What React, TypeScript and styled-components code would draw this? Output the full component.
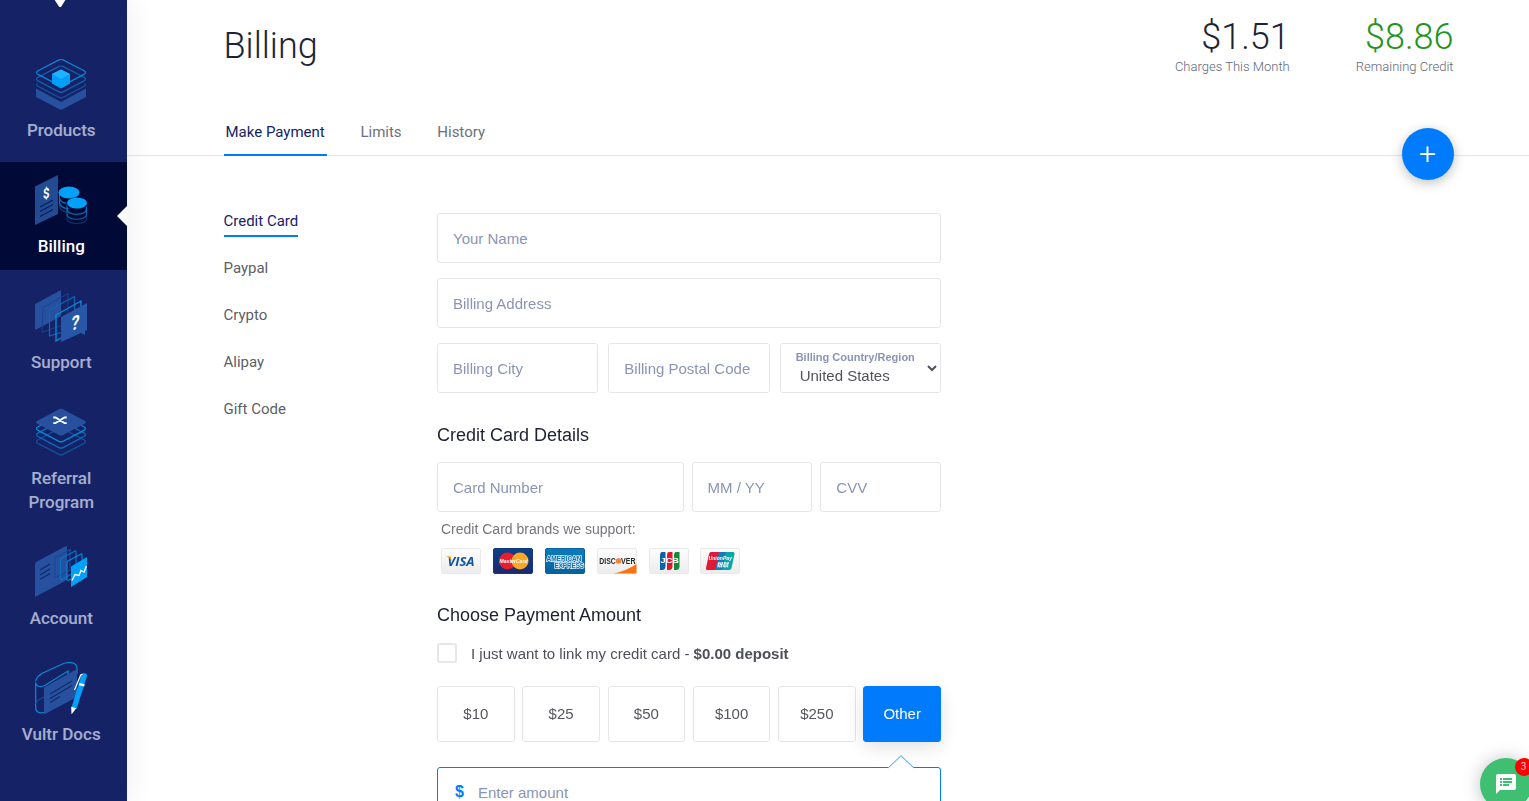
import React from "react";
import styled, { createGlobalStyle } from "styled-components";

const GlobalStyle = createGlobalStyle`
  *, *::before, *::after { box-sizing: border-box; }
  html, body { margin: 0; padding: 0; height: 100%; overflow: hidden; background: #fff; }
  body { font-family: Roboto, sans-serif; color: #1d2336; }
  input, select, button { font-family: "Liberation Sans", Arial, sans-serif; margin: 0; }
`;

const Page = styled.div`
  display: flex;
  height: 801px;
  overflow: hidden;
  position: relative;
`;

const Sidebar = styled.aside`
  position: relative;
  z-index: 1;
  width: 127px;
  flex: none;
  background: #152366;
  box-shadow: 0 0 28px rgba(0, 0, 0, 0.08);
  display: flex;
  flex-direction: column;
`;

const LogoTip = styled.div`
  height: 46px;
  padding-left: 54px;
  flex: none;
  svg { display: block; }
`;

const NavList = styled.nav`
  display: flex;
  flex-direction: column;
  gap: 8px;
`;

const NavItem = styled.a<{ $active?: boolean }>`
  position: relative;
  display: flex;
  flex-direction: column;
  align-items: center;
  gap: 8px;
  padding: 12px 4.5px 12px 0;
  background: ${(p) => (p.$active ? "#010a37" : "transparent")};
  svg { display: block; margin-left: -0.5px; }
  &::after {
    content: "";
    display: ${(p) => (p.$active ? "block" : "none")};
    position: absolute;
    right: 0;
    top: 44px;
    border: 10px solid transparent;
    border-left: 0;
    border-right-color: #fafafa;
  }
`;

const NavLabel = styled.span<{ $active?: boolean }>`
  width: 90px;
  text-align: center;
  font-size: 17px;
  line-height: 24px;
  font-weight: 500;
  color: ${(p) => (p.$active ? "#fff" : "#ecf0ff")};
  opacity: ${(p) => (p.$active ? 1 : 0.68)};
`;

const Main = styled.main`
  flex: 1;
  min-width: 0;
`;

const Header = styled.header`
  height: 156px;
  padding: 0 75.5px 0 96.5px;
  border-bottom: 1px solid #e5e5e8;
  display: flex;
  flex-direction: column;
  justify-content: space-between;
  position: relative;
`;

const HeaderTop = styled.div`
  display: flex;
  justify-content: space-between;
`;

const Title = styled.h1`
  margin: 22px 0 0;
  font-size: 36px;
  line-height: 48px;
  font-weight: 300;
`;

const Stats = styled.div`
  display: flex;
  gap: 66px;
  padding-top: 16px;
`;

const Stat = styled.div`
  text-align: right;
`;

const StatValue = styled.div<{ $positive?: boolean }>`
  font-size: 36px;
  line-height: 42px;
  font-weight: 300;
  color: ${(p) => (p.$positive ? "#1f9424" : "#1d2336")};
`;

const StatLabel = styled.div`
  font-size: 13px;
  line-height: 18px;
  font-weight: 300;
  color: #61667a;
`;

const Tabs = styled.div`
  display: flex;
  gap: 31.7px;
  margin-bottom: -1px;
`;

const Tab = styled.a<{ $active?: boolean }>`
  font-size: 15px;
  line-height: 20px;
  padding: 0 2px 12px;
  border-bottom: 2px solid ${(p) => (p.$active ? "#007bfc" : "transparent")};
  color: ${(p) => (p.$active ? "#152366" : "#6c7080")};
`;

const AddButton = styled.button`
  position: absolute;
  right: 75px;
  top: 128px;
  width: 52px;
  height: 52px;
  padding: 0 1px 0 0;
  border: 0;
  border-radius: 50%;
  background: #007bfc;
  box-shadow: 0 3px 12px rgba(0, 0, 0, 0.25);
  color: #fff;
  font: 300 30px/52px Roboto, sans-serif;
  text-align: center;
`;

const Content = styled.div`
  display: flex;
  padding: 57px 0 0 96.5px;
`;

const MethodNav = styled.nav`
  width: 213.5px;
  display: flex;
  flex-direction: column;
  align-items: flex-start;
  gap: 21px;
  margin-top: -2px;
`;

const Method = styled.a<{ $active?: boolean }>`
  font-size: 15px;
  line-height: 20px;
  padding-bottom: 4px;
  border-bottom: 2px solid ${(p) => (p.$active ? "#007bfc" : "transparent")};
  color: ${(p) => (p.$active ? "#152366" : "#5d5f66")};
`;

const Form = styled.form`
  width: 504px;
  font-family: "Liberation Sans", Arial, sans-serif;
  opacity: 0.999;
`;

const FieldRow = styled.div<{ $columns?: string; $gap?: number }>`
  display: grid;
  grid-template-columns: ${(p) => p.$columns || "1fr"};
  column-gap: ${(p) => p.$gap || 0}px;
`;

const Stack = styled.div`
  display: flex;
  flex-direction: column;
  gap: 15px;
`;

const TextInput = styled.input`
  width: 100%;
  min-width: 0;
  height: 50px;
  border: 1px solid #e5e6ea;
  border-radius: 3px;
  padding: 0 15px;
  font-size: 15px;
  color: #4b4d55;
  background: #fff;
  outline: none;
  &::placeholder { color: #8a94b5; opacity: 1; }
`;

const SelectField = styled.div`
  position: relative;
  height: 50px;
`;

const SelectLabel = styled.label`
  position: absolute;
  left: 16px;
  top: 8px;
  font-size: 11px;
  line-height: 13px;
  font-weight: 700;
  color: #8a94b5;
  white-space: nowrap;
`;

const Select = styled.select`
  width: 100%;
  height: 50px;
  border: 1px solid #e5e6ea;
  border-radius: 3px;
  padding: 14px 0 0 15px;
  font-size: 15px;
  color: #505258;
  background: #fff;
`;

const SectionTitle = styled.h2`
  margin: 0;
  padding: 31px 0 16px;
  font-size: 18px;
  line-height: 22px;
  font-weight: 400;
  color: #1d2130;
`;

const AmountTitle = styled(SectionTitle)`
  padding: 30px 0 17px;
`;

const BrandsText = styled.p`
  margin: 0;
  padding: 9px 0 0 4px;
  font-size: 14px;
  line-height: 16px;
  color: #74767c;
`;

const Brands = styled.div`
  display: flex;
  gap: 11.88px;
  padding: 11px 0 0 4px;
  svg { display: block; }
`;

const CheckRow = styled.label`
  display: flex;
  align-items: center;
  gap: 14px;
  height: 20px;
  font-size: 15px;
  line-height: 20px;
  color: #4d5057;
`;

const CheckText = styled.span`
  padding-top: 2px;
`;

const CheckBox = styled.span`
  width: 20px;
  height: 20px;
  border: 2px solid #e5e6ea;
  border-radius: 3px;
`;

const Amounts = styled.div`
  display: grid;
  grid-template-columns: repeat(6, 1fr);
  column-gap: 7.56px;
  margin-top: 23px;
`;

const Amount = styled.button<{ $active?: boolean }>`
  height: 56px;
  padding: 0 0 2px;
  font-size: 15px;
  border-radius: 3px;
  border: 1px solid ${(p) => (p.$active ? "#007bfc" : "#e5e6ea")};
  background: ${(p) => (p.$active ? "#007bfc" : "#fff")};
  color: ${(p) => (p.$active ? "#fff" : "#55575d")};
  box-shadow: ${(p) => (p.$active ? "0 5px 20px rgba(0, 0, 0, 0.13)" : "none")};
`;

const AmountBox = styled.div`
  position: relative;
  margin-top: 25px;
  height: 50px;
  border: 1px solid #007bfc;
  border-radius: 3px;
  display: flex;
  align-items: center;
  padding: 0 17px;
  background: #fff;
`;

const Pointer = styled.svg`
  position: absolute;
  right: 26px;
  top: -13px;
`;

const Currency = styled.span`
  width: 23px;
  font-size: 16px;
  line-height: 20px;
  font-weight: 700;
  color: #007bfc;
`;

const AmountInput = styled.input`
  flex: 1;
  border: 0;
  outline: 0;
  padding: 0;
  font-size: 15px;
  background: transparent;
  &::placeholder { color: #8a94b5; opacity: 1; }
`;

const ChatButton = styled.div`
  position: absolute;
  left: 1480px;
  top: 758px;
  width: 52px;
  height: 52px;
  border-radius: 50%;
  background: #3fbf72;
  box-shadow: 0 1px 18px rgba(0, 0, 0, 0.25);
  display: flex;
  align-items: center;
  justify-content: center;
`;

const Badge = styled.span`
  position: absolute;
  left: 35px;
  top: 0;
  width: 18px;
  height: 18px;
  border-radius: 50%;
  background: #fd0000;
  color: #ffc9c9;
  font: 400 10px/18px Roboto, sans-serif;
  text-align: center;
  padding-right: 1px;
`;

const Icon = ({ children }: { children: React.ReactNode }) => (
  <svg width="52" height="52" viewBox="0 0 52 52" fill="none">{children}</svg>
);

const layer = "M3 12.2 24 1.4Q26 .6 28 1.4L49 12.2Q52 14 49 15.9L28 26.9Q26 28 24 26.9L3 15.9Q0 14 3 12.2Z";

const ProductsIcon = () => (
  <Icon>
    <path d="M1 30.5 26 44 51 30.5V39L28 51Q26 52.2 24 51L1 39Z" fill="#27519f" />
    <path d={layer} transform="translate(0 12.5)" stroke="#12509d" strokeWidth="1.2" clipPath="url(#products-low)" />
    <clipPath id="products-low"><rect y="13" width="52" height="20" /></clipPath>
    <path d={layer} transform="translate(0 7)" stroke="#0f62b0" strokeWidth="1.2" />
    <path d={layer} transform="translate(0 .5)" stroke="#0b86d8" strokeWidth="1.2" />
    <path d="m26 11.5 9 4.5v9.5L26 30.5l-9-5V16Z" fill="#009ff9" />
    <path d="m26 11.5 9 4.5-9 5-9-5Z" fill="#20b1ff" />
  </Icon>
);

const BillingIcon = () => (
  <Icon>
    <path d="M0 12.5 23 1v39L0 51Z" fill="#234b93" />
    <text x="0" y="0" transform="matrix(1 -.25 0 1 8 25)" fontFamily="Roboto, sans-serif" fontWeight="700" fontSize="14" textLength="6.5" lengthAdjust="spacingAndGlyphs" fill="#fff">$</text>
    <path d="m5 33 13-7M5 37.5l13-7M5 42.5l13-7" stroke="#091c56" strokeWidth="1.1" />
    <g stroke="#0878c4" strokeWidth="1.1">
      <path d="M24.5 18.5v6c1 3 4 5 9 5M24.5 24v5c1 4 5 5.5 9 5.5" />
      <path d="M24.5 29v4c2 4 5 5.5 9 5" opacity=".5" />
      <path d="M32 30v5c0 7 19.5 7 19.5 0v-5" />
      <path d="M32 35v5c0 7 19.5 7 19.5 0v-5" opacity=".8" />
      <path d="M32 40v5c0 6 19.5 6 19.5 0v-5" opacity=".4" />
    </g>
    <ellipse cx="34" cy="18.500" rx="10.500" ry="6" fill="#00a1f9" />
    <ellipse cx="42" cy="29.500" rx="10.800" ry="6.200" fill="#010a37" />
    <ellipse cx="42" cy="29" rx="10" ry="5.600" fill="#00a1f9" />
  </Icon>
);

const SupportIcon = () => (
  <Icon>
    <path d="M0 14 26 0v26L8 36 0 40Z" fill="#27519f" />
    <path d="M8 17.5 33 3.5V33L7 42.5Z" stroke="#164392" />
    <path d="M14.5 20 39.5 6.5V36l-12 6-13 4Z" stroke="#0c67b5" strokeWidth="1.2" />
    <path d="m21 25 25-14v28l-17 7-8 5Z" stroke="#058fde" strokeWidth="1.3" />
    <path d="m26 27 26-14v27l-2 1v4l-4-2-20 9Z" fill="#2757a6" />
    <text x="0" y="0" transform="matrix(1 -.35 -.1 1 35.8 41)" fontFamily="Roboto, sans-serif" fontWeight="700" fontSize="20" textLength="8" lengthAdjust="spacingAndGlyphs" fill="#fff">?</text>
  </Icon>
);

const ReferralIcon = () => (
  <Icon>
    <path d={layer} transform="translate(0 21.5)" stroke="#10519e" strokeWidth="1.2" />
    <path d={layer} transform="translate(0 14.7)" stroke="#096fbe" strokeWidth="1.2" />
    <path d={layer} transform="translate(0 8.5)" stroke="#078ad9" strokeWidth="1.2" />
    <path transform="translate(0 2.5)" d="M2 12.5 24 .7Q26-.3 28 .7l22 11.800Q52 14 50 15L28 26.5Q26 27.5 24 26.5L2 15Q0 14 2 12.5Z" fill="#27519f" />
    <path d="M18.3 11.5h2.200l9 5.600h2.200M18.3 17.100h2.200l9-5.600h2.200" stroke="#fff" strokeWidth="1.8" />
  </Icon>
);

const AccountIcon = () => (
  <Icon>
    <path d="M0 18Q0 16.5 2 15.5L30 .5q2-1 2 1V34L0 51Z" fill="#27519f" />
    <path d="m5 24 10-6M5 29l10-6M5 33.5l10-6" stroke="#102a68" strokeWidth="1.4" />
    <g strokeWidth="1.2">
      <path d="M20 12 35 3.5V24l-13 7q-2 1-2-1Z" stroke="#19499a" />
      <path d="M25.5 14.5Q25.5 13 27 12L40 5q1-.5 1 1v19.5l-14 8q-1.5 1-1.5-1Z" stroke="#0873c2" />
      <path d="M32 17.5Q32 16 33 15l13-7q1-.5 1 1v18L34 34q-2 1-2-1Z" stroke="#0785d4" />
    </g>
    <path d="m36 20.5 16-9.5V31L36 41Z" fill="#00a1f9" />
    <path d="m37 34.5 3-6 4 1 2-5 3 1.5 2.5-6" stroke="#fff" strokeWidth="1.3" />
  </Icon>
);

const DocsIcon = () => (
  <Icon>
    <path d="M.7 20.5V46c0 4.500 5 6 9 4M.7 20.5c0 4 5 5 9 3L33 9v10M.7 19.5c0-3 3-6 6-8L28 1.7c7-2.500 14-1 14 4.5V12" stroke="#078ad9" strokeWidth="1.2" />
    <path d="M.7 42c0-4 9-7 9-7" stroke="#0c5cae" />
    <path d="m9 25.5 33-18.5V35L9 52.5Z" fill="#27519f" />
    <path d="m15 32 22-13M15 36.5l22-13M15 40.5l10-6" stroke="#102a68" strokeWidth="1.2" />
    <path d="M46.5 12.5q.8-1.500 2-1.5l2 .5q2 .5 1.500 2.500l-10.500 33-5-1.500Z" fill="#00a1f9" />
    <path d="m36.2 44.7 5 1.6-4.700 6.200ZM44.5 21l5.200 1.300-.5 2.200-5.200-1.300Z" fill="#fff" />
    <path d="m39.5 28 6-14.5q.5-1.200 2-1" stroke="#fff" strokeWidth="1.2" />
  </Icon>
);

const navItems = [
  { label: "Products", icon: <ProductsIcon /> },
  { label: "Billing", icon: <BillingIcon />, active: true },
  { label: "Support", icon: <SupportIcon /> },
  { label: "Referral Program", icon: <ReferralIcon /> },
  { label: "Account", icon: <AccountIcon /> },
  { label: "Vultr Docs", icon: <DocsIcon /> },
];

const Card = ({ fill = "url(#card-face)", border = "#e9e9e9", children }: { fill?: string; border?: string; children: React.ReactNode }) => (
  <svg width="40" height="26" viewBox="0 0 40 26">
    <defs>
      <linearGradient id="card-face" x2="0" y2="1"><stop stopColor="#fdfdfd" /><stop offset="1" stopColor="#ececec" /></linearGradient>
      <linearGradient id="card-navy" x2="0" y2="1"><stop stopColor="#0c4286" /><stop offset="1" stopColor="#1a2a70" /></linearGradient>
      <linearGradient id="card-sky" x2="0" y2="1"><stop stopColor="#0c7cbc" /><stop offset="1" stopColor="#06619c" /></linearGradient>
    </defs>
    <rect x=".5" y=".5" width="39" height="25" rx="1.5" fill={fill} stroke={border} />
    {children}
  </svg>
);

const sans = "Open Sans, sans-serif";
const arial = "Liberation Sans, sans-serif";

const CardBrands = () => (
  <Brands>
    <Card>
      <text x="6.5" y="17.5" fontFamily={sans} fontWeight="700" fontStyle="italic" fontSize="12.5" textLength="27" lengthAdjust="spacingAndGlyphs" fill="#0d559f">VISA</text>
      <path d="M5 8.3h4.500l1.500 5Q9 9.5 5 8.3Z" fill="#f4a51c" />
    </Card>
    <Card fill="url(#card-navy)" border="#123a7c">
      <circle cx="14.5" cy="13" r="8.5" fill="#ea1d2c" />
      <circle cx="27" cy="13" r="8.5" fill="#f9a72b" />
      <text x="6.5" y="15.2" fontFamily={arial} fontWeight="700" fontStyle="italic" fontSize="5.8" textLength="28" lengthAdjust="spacingAndGlyphs" fill="#fff">MasterCard</text>
    </Card>
    <Card fill="url(#card-sky)" border="#09629f">
      <g fontFamily={arial} fontWeight="700" fontSize="7" fill="#0b70ae" stroke="#e4f2fa" strokeWidth="1.5" paintOrder="stroke">
        <text x="1.5" y="13.3" textLength="35" lengthAdjust="spacingAndGlyphs">AMERICAN</text>
        <text x="9.5" y="19.6" textLength="29.500" lengthAdjust="spacingAndGlyphs">EXPRESS</text>
      </g>
    </Card>
    <Card>
      <path d="M17 25.5q13-3 22.500-9.500V24q0 1.5-1.500 1.5Z" fill="#fa730f" />
      <g fontFamily={arial} fontWeight="700" fontSize="8.3" fill="#29292b">
        <text x="2.3" y="15.8" textLength="16.5" lengthAdjust="spacingAndGlyphs">DISC</text>
        <text x="24" y="15.8" textLength="14.5" lengthAdjust="spacingAndGlyphs">VER</text>
      </g>
      <circle cx="21.5" cy="13" r="2.8" fill="#f58238" />
    </Card>
    <Card>
      <path d="M13 4h3.500v14q0 4-3.500 4h-2V8q0-4 2-4Z" fill="#0b61ab" />
      <path d="M20 4h3.500v14q0 4-3.500 4h-2V8q0-4 2-4Z" fill="#e21830" />
      <path d="M27 4h3.500v14q0 4-3.500 4h-2V8q0-4 2-4Z" fill="#168b35" />
      <text x="11.5" y="15.3" fontFamily={arial} fontWeight="700" fontSize="6.5" textLength="18.5" lengthAdjust="spacingAndGlyphs" fill="#fff">JCB</text>
    </Card>
    <Card>
      <path d="M11 4h9l-3.500 18H7q-1.500 0-1-2L9 6q.5-2 2-2Z" fill="#e21836" />
      <path d="M19 4h8l-4 18h-8Z" fill="#147db8" />
      <path d="M26 4h7q2 0 1.500 2l-3 14q-.5 2-2.500 2h-7Z" fill="#0aa5a5" />
      <text x="8.5" y="11.8" fontFamily={arial} fontWeight="700" fontStyle="italic" fontSize="6" textLength="23.5" lengthAdjust="spacingAndGlyphs" fill="#fff">UnionPay</text>
      <text x="16.5" y="18.5" fontFamily="Noto Sans CJK SC, sans-serif" fontWeight="700" fontStyle="italic" fontSize="6" textLength="12" lengthAdjust="spacingAndGlyphs" fill="#fff">银联</text>
    </Card>
  </Brands>
);

export default function App() {
  return (
    <>
      <GlobalStyle />
      <Page>
        <Sidebar>
          <LogoTip>
            <svg width="13" height="8" viewBox="0 0 13 8"><path d="M0-1h12L7.5 6.2Q6 8 4.8 6.2Z" fill="#fff" /></svg>
          </LogoTip>
          <NavList>
            {navItems.map((item) => (
              <NavItem key={item.label} $active={item.active}>
                {item.icon}
                <NavLabel $active={item.active}>{item.label}</NavLabel>
              </NavItem>
            ))}
          </NavList>
        </Sidebar>
        <Main>
          <Header>
            <HeaderTop>
              <Title>Billing</Title>
              <Stats>
                <Stat>
                  <StatValue>$1.51</StatValue>
                  <StatLabel>Charges This Month</StatLabel>
                </Stat>
                <Stat>
                  <StatValue $positive>$8.86</StatValue>
                  <StatLabel>Remaining Credit</StatLabel>
                </Stat>
              </Stats>
            </HeaderTop>
            <Tabs>
              <Tab $active>Make Payment</Tab>
              <Tab>Limits</Tab>
              <Tab>History</Tab>
            </Tabs>
            <AddButton type="button">+</AddButton>
          </Header>
          <Content>
            <MethodNav>
              <Method $active>Credit Card</Method>
              <Method>Paypal</Method>
              <Method>Crypto</Method>
              <Method>Alipay</Method>
              <Method>Gift Code</Method>
            </MethodNav>
            <Form>
              <Stack>
                <TextInput placeholder="Your Name" />
                <TextInput placeholder="Billing Address" />
                <FieldRow $columns="repeat(3, minmax(0, 1fr))" $gap={10}>
                  <TextInput placeholder="Billing City" />
                  <TextInput placeholder="Billing Postal Code" />
                  <SelectField>
                    <Select id="country" defaultValue="US">
                      <option value="US">United States</option>
                    </Select>
                    <SelectLabel htmlFor="country">Billing Country/Region</SelectLabel>
                  </SelectField>
                </FieldRow>
              </Stack>
              <SectionTitle>Credit Card Details</SectionTitle>
              <FieldRow $columns="246.6px 1fr 1fr" $gap={8}>
                <TextInput placeholder="Card Number" />
                <TextInput placeholder="MM / YY" />
                <TextInput placeholder="CVV" />
              </FieldRow>
              <BrandsText>Credit Card brands we support:</BrandsText>
              <CardBrands />
              <AmountTitle>Choose Payment Amount</AmountTitle>
              <CheckRow>
                <CheckBox />
                <CheckText>I just want to link my credit card - <b>$0.00 deposit</b></CheckText>
              </CheckRow>
              <Amounts>
                {["$10", "$25", "$50", "$100", "$250", "Other"].map((label) => (
                  <Amount key={label} type="button" $active={label === "Other"}>{label}</Amount>
                ))}
              </Amounts>
              <AmountBox>
                <Pointer width="26" height="14" viewBox="0 0 26 14">
                  <path d="M0 14V12.5H.7L13 .7l12.300 11.800H26V14Z" fill="#fff" />
                  <path d="M.5 12.7 13 .7l12.500 12" fill="none" stroke="#2f93fb" />
                </Pointer>
                <Currency>$</Currency>
                <AmountInput placeholder="Enter amount" />
              </AmountBox>
            </Form>
          </Content>
        </Main>
        <ChatButton>
          <svg width="20" height="20" viewBox="0 0 20 20">
            <path d="M2 0h16q2 0 2 2v12q0 2-2 2H4l-4 4V2Q0 0 2 0Z" fill="#fff" />
            <path d="M4 4h2v2H4ZM4 7h2v2H4ZM4 10h2v2H4ZM7 4h9v2H7ZM7 7h9v2H7ZM7 10h6v2H7Z" fill="#3fbf72" />
          </svg>
          <Badge>3</Badge>
        </ChatButton>
      </Page>
    </>
  );
}
